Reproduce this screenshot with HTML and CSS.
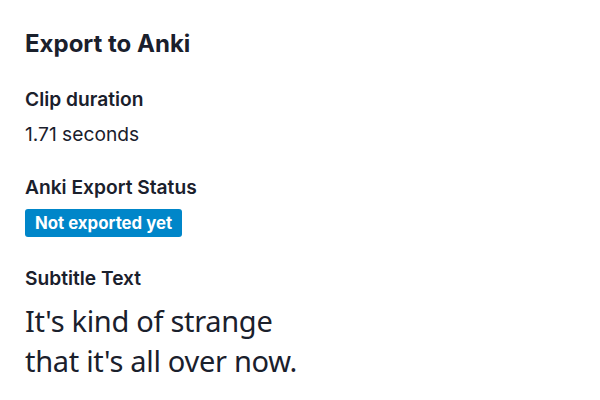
FILE: index.html
```html
<!DOCTYPE html>
<html>
<head>
<meta charset="utf-8">
<link rel="stylesheet" href="styles.css">
</head>
<body>
<div class="panel">
  <h1 class="title">Export to Anki</h1>
  <div class="fields">
    <section class="field">
      <div class="label">Clip duration</div>
      <div class="value">1.71 seconds</div>
    </section>
    <section class="field">
      <div class="label">Anki Export Status</div>
      <div class="badge-row"><span class="badge">Not exported yet</span></div>
    </section>
    <section class="field">
      <div class="label">Subtitle Text</div>
      <div class="subtitle">It's kind of strange<br>that it's all over now.</div>
    </section>
  </div>
</div>
</body>
</html>
```

FILE: styles.css
```css
html, body {
  margin: 0;
  background: #ffffff;
}
body {
  font-family: Inter, "Noto Sans", sans-serif;
  color: #1a202c;
}
.panel {
  padding: 28px 25px;
  display: flex;
  flex-direction: column;
  gap: 27px;
}
.title {
  margin: 0;
  font-size: 24px;
  font-weight: 700;
  line-height: 32px;
}
.fields {
  display: flex;
  flex-direction: column;
  gap: 29px;
}
.field {
  display: flex;
  flex-direction: column;
  gap: 11px;
}
.label {
  font-size: 19.2px;
  font-weight: 600;
  line-height: 24px;
}
.value {
  font-size: 19.2px;
  line-height: 24px;
}
.badge-row {
  display: flex;
  margin-top: -1px;
}
.badge {
  display: inline-block;
  background: #0086c9;
  color: #ffffff;
  font-size: 16.8px;
  font-weight: 700;
  line-height: 28px;
  padding: 0 10px;
  border-radius: 3px;
}
.subtitle {
  font-family: "Noto Sans", sans-serif;
  font-size: 29px;
  letter-spacing: -0.3px;
  line-height: 40px;
}
```
